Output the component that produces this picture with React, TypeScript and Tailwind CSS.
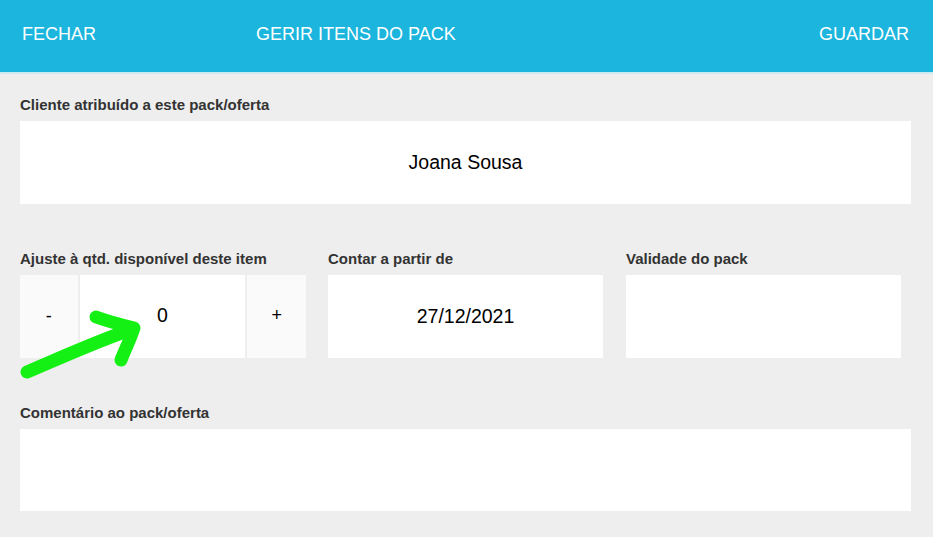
import React from "react";

const Label = ({ children }: { children: React.ReactNode }) => (
  <div className="text-[15px] font-bold text-[#333333] leading-[17px] mb-[8px]">{children}</div>
);

const App = () => {
  return (
    <div className="relative min-h-[537px] bg-[#eeeeee] font-['Liberation_Sans',Arial,sans-serif]">
      <header className="h-[74px] bg-[#1bb5dd] border-b-2 border-[#cdeaf1] flex items-center text-white text-[18px] pl-[22px] pr-[24px] pb-[3px]">
        <span className="w-[234px]">FECHAR</span>
        <span className="flex-1">GERIR ITENS DO PACK</span>
        <span>GUARDAR</span>
      </header>

      <main className="px-[20px] pt-[22px] w-[931px]">
        <Label>Cliente atribuído a este pack/oferta</Label>
        <div className="h-[83px] bg-white flex items-center justify-center text-[19.5px] text-black">
          Joana Sousa
        </div>

        <div className="flex mt-[46px]">
          <div className="w-[308px] shrink-0">
            <Label>Ajuste à qtd. disponível deste item</Label>
            <div className="flex h-[83px] w-[286px] gap-[2px]">
              <button className="w-[58px] bg-[#fafafa] text-[18px] text-black flex items-center justify-center">-</button>
              <div className="w-[167px] bg-white flex items-center justify-center text-[19.5px] text-black pb-[2px]">0</div>
              <button className="w-[59px] bg-[#fafafa] text-[18px] text-black flex items-center justify-center pb-[2px]">+</button>
            </div>
          </div>
          <div className="w-[298px] shrink-0">
            <Label>Contar a partir de</Label>
            <div className="h-[83px] w-[275px] bg-white flex items-center justify-center text-[19.5px] text-black">
              27/12/2021
            </div>
          </div>
          <div className="shrink-0">
            <Label>Validade do pack</Label>
            <div className="h-[83px] w-[275px] bg-white" />
          </div>
        </div>

        <div className="mt-[46px]">
          <Label>Comentário ao pack/oferta</Label>
          <div className="h-[82px] bg-white" />
        </div>
      </main>

      <svg className="absolute left-0 top-0 pointer-events-none" width="160" height="400" viewBox="0 0 160 400">
        <g fill="none" stroke="#14f014" strokeWidth="13" strokeLinecap="round" strokeLinejoin="round">
          <path d="M27 372 C60 358 95 342 130 330" />
          <path d="M96 317 C110 322 122 325 134 328 C130 340 125 350 121 360" />
        </g>
      </svg>
    </div>
  );
};

export default App;
